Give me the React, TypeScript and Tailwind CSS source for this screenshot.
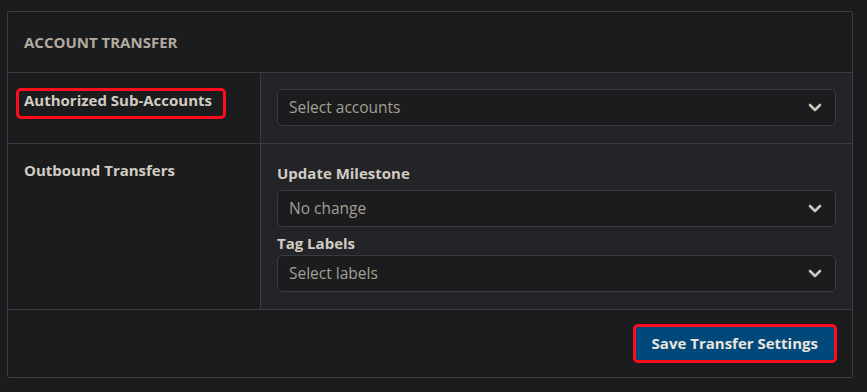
import React from "react";

function Chevron() {
  return (
    <svg width="14" height="9" viewBox="0 0 14 9" fill="none" className="shrink-0">
      <polyline
        points="2,2 7,7 12,2"
        stroke="#cbc5bb"
        strokeWidth="2.6"
        strokeLinecap="round"
        strokeLinejoin="round"
      />
    </svg>
  );
}

function SelectBox({ text }: { text: string }) {
  return (
    <div className="h-[37px] flex items-center justify-between pl-[11px] pr-[13px] rounded-[5px] border border-[#3b3c3f] bg-[#1b1c1e]">
      <span className="text-[15.5px] text-[#a59f95]">{text}</span>
      <Chevron />
    </div>
  );
}

export default function App() {
  return (
    <div
      className="min-h-screen bg-[#1b1c1e] pl-[7px] pr-[14px] pt-[11px]"
      style={{ fontFamily: "'Open Sans', 'Noto Sans', sans-serif" }}
    >
      <div className="border border-[#3b3c3f] rounded-[2px]">
        {/* Header */}
        <div className="h-[61px] flex items-center px-4 border-b border-[#3b3c3f]">
          <h2 className="text-[15px] font-bold text-[#b3ab9f]">ACCOUNT TRANSFER</h2>
        </div>

        {/* Authorized Sub-Accounts */}
        <div className="grid grid-cols-[253px_1fr] border-b border-[#3b3c3f]">
          <div className="px-4 pt-[15px] border-r border-[#3b3c3f]">
            <span className="relative inline-block text-[15px] leading-5 font-bold text-[#d2ccc3]">
              Authorized Sub-Accounts
              <span className="absolute -top-[2px] -bottom-[9px] -left-[8px] -right-[14px] border-[3px] border-[#ff0d1f] rounded-[5px]" />
            </span>
          </div>
          <div className="bg-[#232427] px-4 pt-4 pb-[17px]">
            <SelectBox text="Select accounts" />
          </div>
        </div>

        {/* Outbound Transfers */}
        <div className="grid grid-cols-[253px_1fr] border-b border-[#3b3c3f]">
          <div className="px-4 pt-[14px] border-r border-[#3b3c3f]">
            <span className="text-[15px] leading-5 font-bold text-[#d2ccc3]">Outbound Transfers</span>
          </div>
          <div className="bg-[#232427] px-4 pt-[19px] pb-[17px]">
            <div className="text-[15px] leading-5 font-bold text-[#d2ccc3] mb-[7px]">Update Milestone</div>
            <SelectBox text="No change" />
            <div className="text-[15px] leading-5 font-bold text-[#d2ccc3] mt-[6px] mb-[2px]">Tag Labels</div>
            <SelectBox text="Select labels" />
          </div>
        </div>

        {/* Footer */}
        <div className="h-[67px] flex items-center justify-end pr-[18px]">
          <button className="h-[33px] px-4 rounded-[2px] bg-[#02497b] text-[15px] font-bold text-[#e9e5dd] outline-[3px] outline-[#ff0d1f] outline-offset-0">
            Save Transfer Settings
          </button>
        </div>
      </div>
    </div>
  );
}
